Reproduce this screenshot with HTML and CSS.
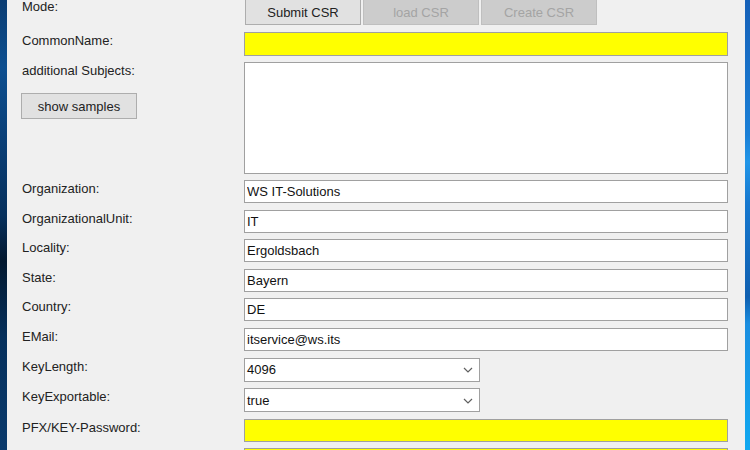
FILE: index.html
```html
<!doctype html>
<html lang="en">
<head>
	<meta charset="UTF-8">
	<title>CSR Tool</title>
	<link rel="stylesheet" href="styles.css">
</head>
<body>
	<div class="desk desk-left"></div>
	<div class="window">
		<div class="row row-mode">
			<label class="lbl">Mode:</label>
			<div class="modes">
				<button class="btn">Submit CSR</button>
				<button class="btn" disabled>load CSR</button>
				<button class="btn" disabled>Create CSR</button>
			</div>
		</div>
		<div class="row row-cn">
			<label class="lbl">CommonName:</label>
			<input class="field required" type="text" value="">
		</div>
		<div class="row row-subjects">
			<div class="side">
				<label class="lbl">additional Subjects:</label>
				<button class="btn samples">show samples</button>
			</div>
			<textarea class="field memo"></textarea>
		</div>
		<div class="row row-first">
			<label class="lbl">Organization:</label>
			<input class="field" type="text" value="WS IT-Solutions">
		</div>
		<div class="row">
			<label class="lbl">OrganizationalUnit:</label>
			<input class="field" type="text" value="IT">
		</div>
		<div class="row">
			<label class="lbl">Locality:</label>
			<input class="field" type="text" value="Ergoldsbach">
		</div>
		<div class="row">
			<label class="lbl">State:</label>
			<input class="field" type="text" value="Bayern">
		</div>
		<div class="row">
			<label class="lbl">Country:</label>
			<input class="field" type="text" value="DE">
		</div>
		<div class="row">
			<label class="lbl">EMail:</label>
			<input class="field" type="text" value="itservice@ws.its">
		</div>
		<div class="row">
			<label class="lbl">KeyLength:</label>
			<div class="field combo">
				<span>4096</span>
				<svg width="10" height="6" viewBox="0 0 10 6"><path d="M1 1 L5 5 L9 1" fill="none" stroke="#606060" stroke-width="1.2"/></svg>
			</div>
		</div>
		<div class="row">
			<label class="lbl">KeyExportable:</label>
			<div class="field combo">
				<span>true</span>
				<svg width="10" height="6" viewBox="0 0 10 6"><path d="M1 1 L5 5 L9 1" fill="none" stroke="#606060" stroke-width="1.2"/></svg>
			</div>
		</div>
		<div class="row">
			<label class="lbl">PFX/KEY-Password:</label>
			<input class="field required" type="password" value="">
		</div>
		<div class="row">
			<label class="lbl"></label>
			<input class="field required" type="password" value="">
		</div>
	</div>
	<div class="desk desk-right"></div>
</body>
</html>
```

FILE: styles.css
```css
html, body {
	margin: 0;
	padding: 0;
	height: 100%;
	overflow: hidden;
}

body {
	display: flex;
	background: #f0f0f0;
	font-family: "Liberation Sans", Arial, sans-serif;
	font-size: 13px;
	color: #222;
}

.desk {
	flex: none;
}
.desk-left {
	width: 7px;
	background: linear-gradient(#0b3d72 0%, #0d4f90 15%, #0a4078 30%, #07305c 48%, #03182f 58%, #06305c 75%, #0a3a6c 100%);
}
.desk-right {
	width: 5px;
	background: linear-gradient(#1560b8 0%, #1a7fd6 30%, #2196e8 36%, #1678cf 45%, #0f5fb0 66%, #1a8ee0 72%, #10a8f0 100%);
}

.window {
	flex: 1;
	padding-left: 15px;
}

.row {
	display: grid;
	grid-template-columns: 222px 484px;
	align-items: start;
	margin-top: 6.6px;
}
.row-mode {
	margin-top: -1px;
}
.row-cn {
	margin-top: 7px;
}
.row-subjects,
.row-first {
	margin-top: 6px;
}

.lbl {
	display: block;
	line-height: 15px;
	padding-top: 1px;
}
.row-mode .lbl {
	padding-top: 0;
}

.modes {
	display: flex;
	gap: 2px;
	padding-left: 1px;
}

.btn {
	font: inherit;
	color: #222;
	background: #e1e1e1;
	border: 1px solid #adadad;
	height: 26px;
	width: 116px;
	padding: 0;
	margin: 0;
}
.btn:disabled {
	background: #cccccc;
	border-color: #bfbfbf;
	color: #a4a4a4;
}

.side .samples {
	display: block;
	width: 116px;
	margin-top: 15px;
	margin-left: -1px;
}

.field {
	box-sizing: border-box;
	display: block;
	width: 484px;
	height: 23px;
	margin: 0;
	padding: 0 2px;
	font: inherit;
	color: #111;
	background: #fff;
	border: 1px solid #a0a0a0;
	outline: none;
}
.row-cn .field {
	height: 24px;
}
.required {
	background: #ffff00;
}

.memo {
	height: 112px;
	resize: none;
}

.combo {
	width: 236px;
	height: 24px;
	display: flex;
	align-items: center;
	justify-content: space-between;
	padding: 0 6px 0 2px;
}
.combo svg {
	margin-top: 1px;
}
```
